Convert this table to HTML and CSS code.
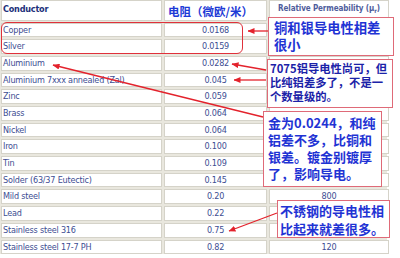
FILE: index.html
```html
<!DOCTYPE html>
<html lang="zh">
<head>
<meta charset="utf-8">
<title>Conductor table</title>
<link rel="stylesheet" href="styles.css">
</head>
<body>
<div class="page">
  <div class="table">
    <div class="cell hd">Conductor</div>
    <div class="cell hd cn">电阻（微欧/米）</div>
    <div class="cell hd perm">Relative Permeability (μ<sub>r</sub>)</div>

    <div class="cell">Copper</div><div class="cell num">0.0168</div><div class="cell num"></div>
    <div class="cell">Silver</div><div class="cell num">0.0159</div><div class="cell num"></div>
    <div class="cell">Aluminium</div><div class="cell num">0.0282</div><div class="cell num"></div>
    <div class="cell">Aluminium 7xxx annealed (Zal)</div><div class="cell num">0.045</div><div class="cell num"></div>
    <div class="cell">Zinc</div><div class="cell num">0.059</div><div class="cell num"></div>
    <div class="cell">Brass</div><div class="cell num">0.064</div><div class="cell num"></div>
    <div class="cell">Nickel</div><div class="cell num">0.064</div><div class="cell num"></div>
    <div class="cell">Iron</div><div class="cell num">0.100</div><div class="cell num"></div>
    <div class="cell">Tin</div><div class="cell num">0.109</div><div class="cell num"></div>
    <div class="cell">Solder (63/37 Eutectic)</div><div class="cell num">0.145</div><div class="cell num"></div>
    <div class="cell">Mild steel</div><div class="cell num">0.20</div><div class="cell num">800</div>
    <div class="cell">Lead</div><div class="cell num">0.22</div><div class="cell num"></div>
    <div class="cell">Stainless steel 316</div><div class="cell num">0.75</div><div class="cell num"></div>
    <div class="cell">Stainless steel 17-7 PH</div><div class="cell num">0.82</div><div class="cell num">120</div>
  </div>

  <div class="ring"></div>

  <svg class="arrows" width="400" height="258" viewBox="0 0 400 258">
    <defs>
      <marker id="head" markerWidth="7" markerHeight="6" refX="6.5" refY="3" orient="auto" markerUnits="userSpaceOnUse">
        <path d="M0,0 L7,3 L0,6 Z" fill="#e3222c"/>
      </marker>
    </defs>
    <line x1="268" y1="31" x2="248" y2="31" class="ar"/>
    <line x1="266" y1="70" x2="232" y2="64" class="ar"/>
    <line x1="266" y1="80" x2="234" y2="80" class="ar"/>
    <line x1="263" y1="117" x2="53" y2="65" class="ar"/>
    <line x1="277" y1="213" x2="229" y2="231" class="ar"/>
  </svg>

  <div class="note n1">铜和银导电性相差<br>很小</div>
  <div class="note n2">7075铝导电性尚可，但<br>比纯铝差多了，不是一<br>个数量级的。</div>
  <div class="note n3">金为0.0244，和纯<br>铝差不多，比铜和<br>银差。镀金别镀厚<br>了，影响导电。</div>
  <div class="note n4">不锈钢的导电性相<br>比起来就差很多。</div>
</div>
</body>
</html>
```

FILE: styles.css
```css
html, body {
  margin: 0;
  padding: 0;
  background: #ffffff;
}

.page {
  position: relative;
  width: 400px;
  height: 258px;
  overflow: hidden;
  background: #ffffff;
}

.table {
  display: grid;
  width: 386px;
  grid-template-columns: 161px 103px 120px;
  grid-template-rows: 20.6px;
  grid-auto-rows: 14.7px;
  gap: 2px;
  padding-left: 1px;
  background: #e9e7de;
  font-family: "DejaVu Sans Condensed", "DejaVu Sans", sans-serif;
  font-stretch: condensed;
  font-size: 9px;
  letter-spacing: -0.2px;
  color: #3d4d92;
}

.cell {
  box-sizing: border-box;
  background: #ffffff;
  border: 1px solid #d5d3c9;
  padding: 0 1px;
  line-height: 12.7px;
  white-space: nowrap;
  overflow: hidden;
}

.num {
  text-align: center;
}

.hd {
  font-weight: bold;
  color: #21307a;
  line-height: 14px;
  padding-top: 1px;
}

.cn {
  font-family: "Noto Sans CJK SC", sans-serif;
  font-size: 11.5px;
  letter-spacing: 0;
  color: #1d3ad6;
  padding-left: 3px;
  padding-top: 3px;
}

.perm {
  text-align: center;
  font-size: 8px;
  letter-spacing: -0.1px;
  color: #4f5d9c;
  padding-top: 1px;
}

.perm sub {
  font-size: 6px;
  vertical-align: -2px;
  line-height: 0;
}

.ring {
  position: absolute;
  left: 1px;
  top: 22px;
  width: 242px;
  height: 32px;
  box-sizing: border-box;
  border: 1.5px solid #e0313b;
  border-radius: 6px;
}

.arrows {
  position: absolute;
  left: 0;
  top: 0;
  pointer-events: none;
}

.ar {
  stroke: #e3222c;
  stroke-width: 1.3;
  marker-end: url(#head);
}

.note {
  position: absolute;
  box-sizing: border-box;
  background: #ffffff;
  border: 1px solid #df6a78;
  font-family: "Noto Sans CJK SC", sans-serif;
  font-weight: bold;
  color: #1f33d4;
  white-space: nowrap;
}

.n1 {
  left: 268px;
  top: 17px;
  width: 126px;
  height: 39px;
  font-size: 13.3px;
  line-height: 16.5px;
  padding: 2px 0 0 5px;
}

.n2 {
  left: 267px;
  top: 59px;
  width: 126px;
  height: 49px;
  font-size: 11.3px;
  line-height: 14px;
  padding: 1px 0 0 2px;
  color: #1b22a8;
}

.n3 {
  left: 263px;
  top: 111px;
  width: 119px;
  height: 76px;
  font-size: 13px;
  line-height: 17px;
  padding: 2px 0 0 4px;
}

.n4 {
  left: 277px;
  top: 200px;
  width: 113px;
  height: 38px;
  font-size: 13px;
  line-height: 18px;
  padding: 1px 0 0 2px;
}
```
